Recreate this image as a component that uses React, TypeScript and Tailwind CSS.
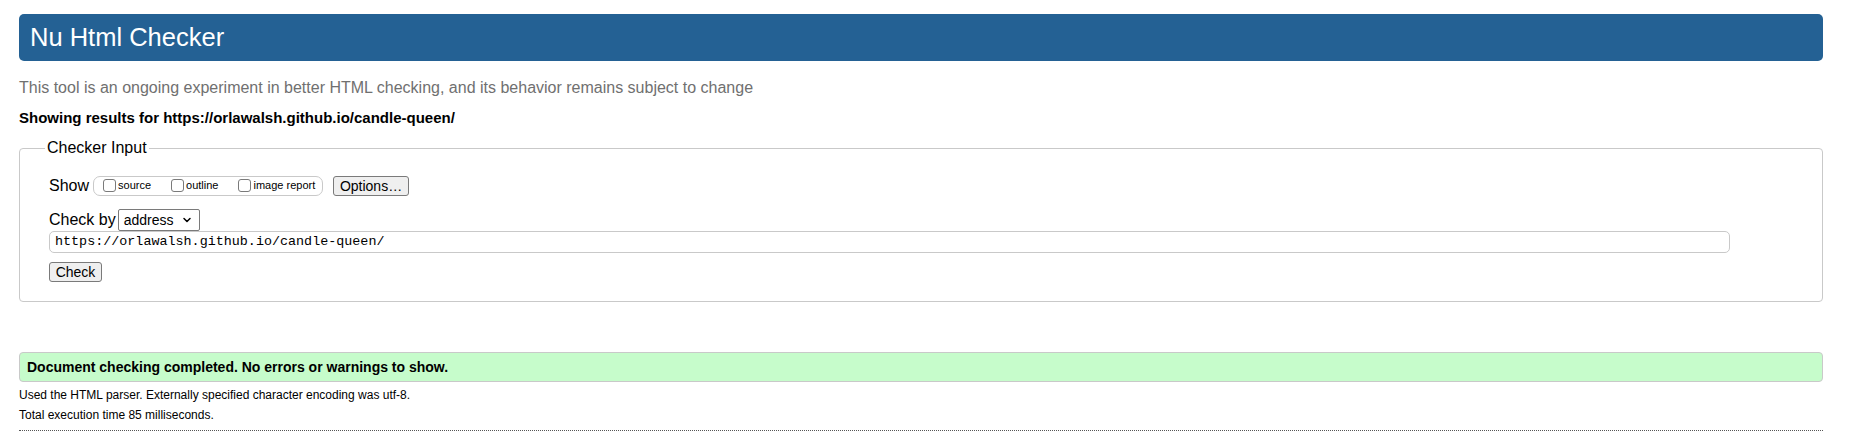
import { ChevronDown } from "lucide-react";

function Box({ label }: { label: string }) {
    return (
        <label className="flex items-center text-[11px] text-black">
            <span className="inline-block w-[13px] h-[13px] border border-[#7a7a7a] rounded-[3px] bg-white mr-[2px]" />
            <span>{label}</span>
        </label>
    );
}

export default function App() {
    return (
        <div className="pl-[19px] pr-[34px] pt-[14px] pb-[14px] font-['Liberation_Sans',Arial,sans-serif] text-black bg-white">
            <h1 className="h-[47px] bg-[#246194] rounded-[5px] text-white text-[25.5px] pl-[11px] flex items-center">
                Nu Html Checker
            </h1>

            <p className="mt-[18px] text-[16px] leading-[18px] text-[#707070]">
                This tool is an ongoing experiment in better HTML checking, and its behavior remains subject to change
            </p>
            <p className="mt-[12px] text-[15px] leading-[18px] font-bold">
                Showing results for https://orlawalsh.github.io/candle-queen/
            </p>

            <fieldset className="mt-[12px] border border-[#c9c9c9] rounded-[4px] pl-[29px] pr-[28px] pb-[17px]">
                <legend className="ml-[-4px] px-[2px] text-[16px] leading-[18px]">Checker Input</legend>

                <div className="flex items-center mt-[18px] h-[21px]">
                    <span className="text-[16px]">Show</span>
                    <div className="ml-[4px] h-[20px] w-[230px] border border-[#c9c9c9] rounded-[7px] flex items-center pl-[9px] gap-[20px]">
                        <Box label="source" />
                        <Box label="outline" />
                        <Box label="image report" />
                    </div>
                    <button className="ml-[10px] h-[20px] w-[76px] border border-[#7a7a7a] rounded-[3px] bg-[#efefef] text-[14px] leading-[18px]">
                        Options…
                    </button>
                </div>

                <div className="flex items-center mt-[13px] h-[22px]">
                    <span className="text-[16px]">Check by</span>
                    <div className="ml-[2px] h-[22px] w-[82px] border border-[#7a7a7a] rounded-[2px] flex items-center justify-between pl-[5px] pr-[6px] text-[14px]">
                        <span>address</span>
                        <ChevronDown size={12} strokeWidth={3} />
                    </div>
                </div>

                <div className="mt-0 h-[22px] w-[1681px] border border-[#c9c9c9] rounded-[5px] flex items-center pl-[5px] font-['Liberation_Mono',monospace] text-[13.4px]">
                    https://orlawalsh.github.io/candle-queen/
                </div>

                <button className="mt-[9px] h-[20px] w-[53px] border border-[#7a7a7a] rounded-[3px] bg-[#efefef] text-[14px] leading-[18px]">
                    Check
                </button>
            </fieldset>

            <div className="mt-[50px] h-[30px] bg-[#c6fccb] border border-[#c9c9c9] rounded-[4px] flex items-center pl-[7px] text-[14px] font-bold">
                Document checking completed. No errors or warnings to show.
            </div>
            <p className="mt-[6px] text-[12px] leading-[14px]">
                Used the HTML parser. Externally specified character encoding was utf-8.
            </p>
            <p className="mt-[6px] text-[12px] leading-[14px]">Total execution time 85 milliseconds.</p>
            <div className="mt-[8px] border-t border-dotted border-[#555]" />
        </div>
    );
}
